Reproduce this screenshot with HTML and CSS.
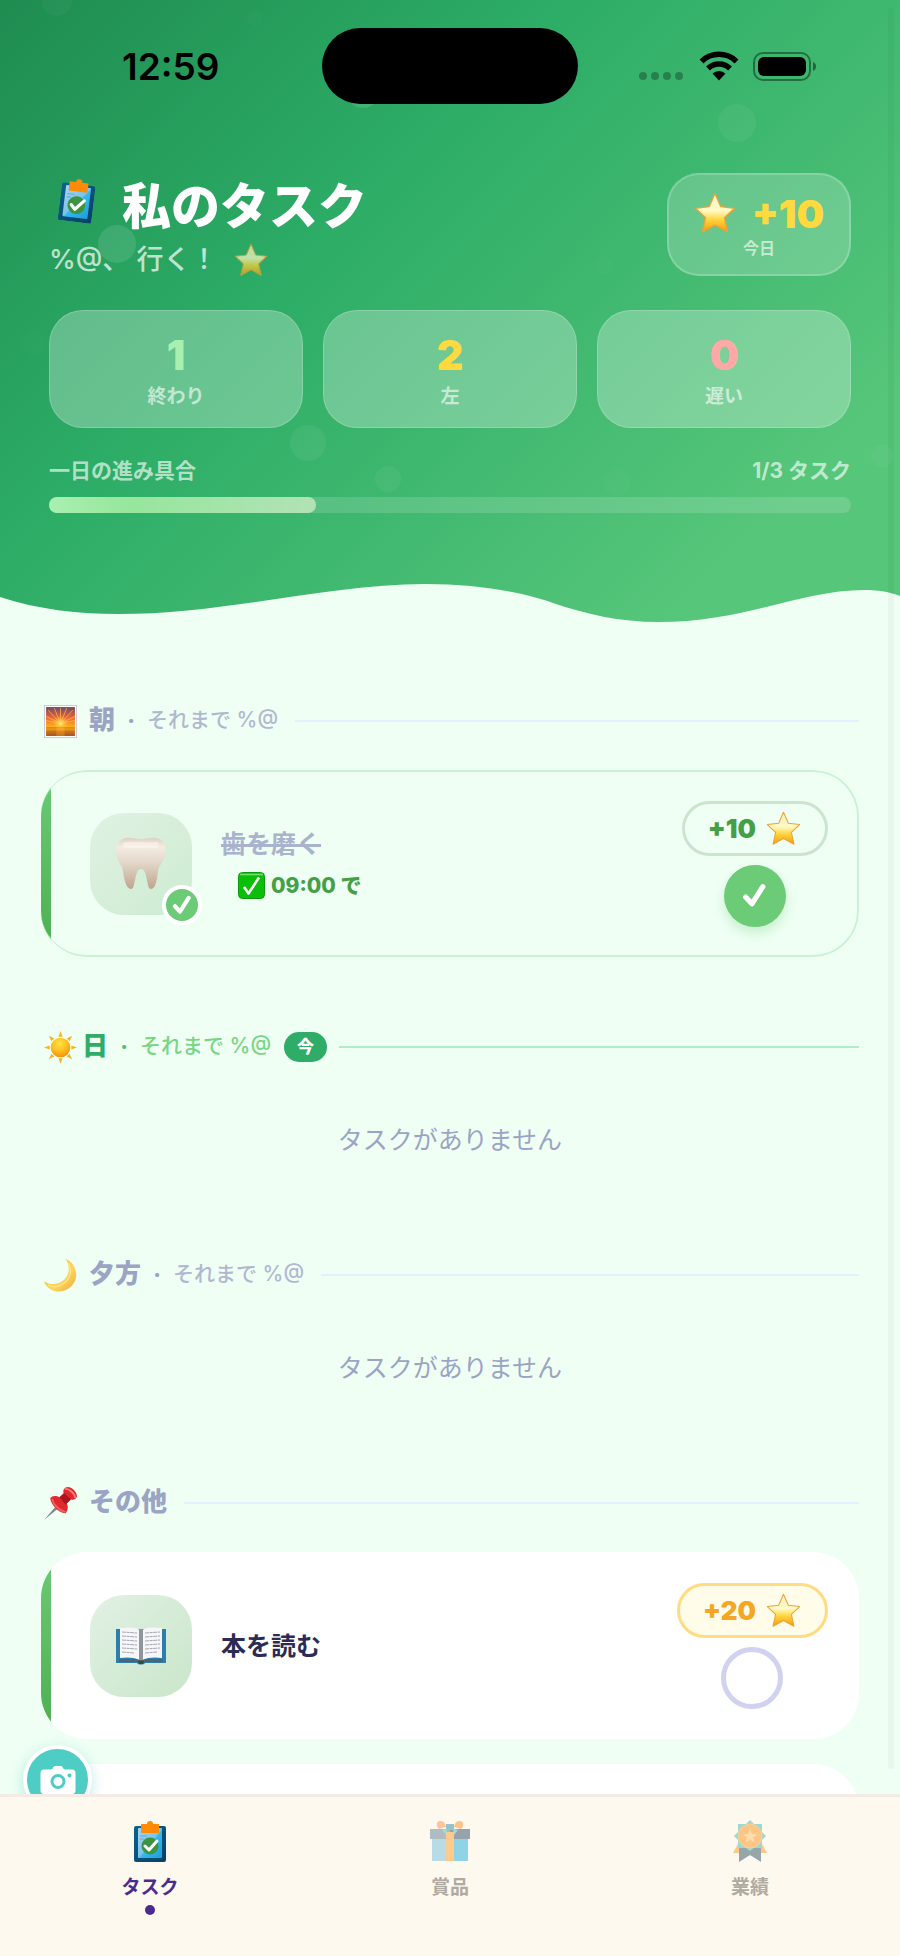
FILE: index.html
```html
<!DOCTYPE html>
<html lang="ja">
<head>
  <meta charset="UTF-8">
  <meta name="viewport" content="width=device-width, initial-scale=1">
  <title>私のタスク</title>
  <link rel="stylesheet" href="styles.css">
</head>
<body>

  <!-- shared icons -->
  <svg class="sprite" aria-hidden="true">
    <defs>
      <linearGradient id="gStar" x1="0" y1="0" x2="0" y2="1">
        <stop offset="0" stop-color="#fff0c8"/><stop offset=".45" stop-color="#fffac4"/>
        <stop offset=".68" stop-color="#ffd53c"/><stop offset="1" stop-color="#f39a12"/>
      </linearGradient>
      <linearGradient id="gPaper" x1="0" y1="0" x2="1" y2="1">
        <stop offset="0" stop-color="#a8d4f0"/><stop offset=".5" stop-color="#7cc3ea"/>
        <stop offset=".55" stop-color="#35b8ee"/><stop offset="1" stop-color="#1a9fdc"/>
      </linearGradient>
      <linearGradient id="gBoard" x1="0" y1="0" x2="1" y2="1">
        <stop offset="0" stop-color="#0b6291"/><stop offset="1" stop-color="#073f66"/>
      </linearGradient>
    </defs>
    <symbol id="star" viewBox="0 0 40 40">
      <path d="M20 1.500 L25.500 14 L38.500 15.500 L29 24.500 L32 38 L20 31.500 L8 38 L11 24.500 L1.500 15.500 L14.500 14 Z" fill="url(#gStar)" stroke="#eda236" stroke-width="1.200" stroke-linejoin="round"/>
    </symbol>
    <symbol id="clipboard" viewBox="0 0 32 42">
      <rect x="0" y="6" width="32" height="36" rx="2" fill="url(#gBoard)"/>
      <rect x="4" y="8" width="24" height="30" rx="1" fill="url(#gPaper)"/>
      <path d="M6 16h7M6 19h4" stroke="#6aa7d2" stroke-width="1"/>
      <path d="M7 4h6a3 3 0 0 1 6 0h6v9h-18z" fill="#ff8a05"/>
      <circle cx="16" cy="26" r="8.500" fill="#3c9440"/>
      <path d="M11 26l4 4 8-9" fill="none" stroke="#fff" stroke-width="3" stroke-linecap="round" stroke-linejoin="round"/>
    </symbol>
    <symbol id="check" viewBox="0 0 24 24">
      <path d="M3.500 13.500l6 6.500L20 3.500" fill="none" stroke="#fff" stroke-width="5" stroke-linecap="round" stroke-linejoin="round"/>
    </symbol>
  </svg>

  <div class="app">
    <div class="scroll">

      <header class="hero">
        <svg class="bubbles" viewBox="0 0 900 624" preserveAspectRatio="none" aria-hidden="true">
          <g fill="#fff">
            <circle cx="57" cy="1" r="15" opacity=".03"/>
            <circle cx="255" cy="18" r="8" opacity=".02"/>
            <circle cx="363" cy="91" r="17" opacity=".12"/>
            <circle cx="117" cy="244" r="19" opacity=".11"/>
            <circle cx="737" cy="123" r="19" opacity=".05"/>
            <circle cx="604" cy="265" r="9" opacity=".02"/>
            <circle cx="33" cy="344" r="12" opacity=".01"/>
            <circle cx="308" cy="443" r="18" opacity=".06"/>
            <circle cx="388" cy="479" r="13" opacity=".05"/>
            <circle cx="617" cy="482" r="14" opacity=".02"/>
            <circle cx="882" cy="456" r="11" opacity=".04"/>
          </g>
        </svg>

        <div class="status-bar">
          <span class="clock">12:59</span>
          <span class="island"></span>
          <span class="status-icons">
            <svg width="46" height="30" viewBox="0 0 46 30" aria-hidden="true">
              <g opacity=".28"><circle cx="4" cy="25" r="4"/><circle cx="16" cy="25" r="4"/><circle cx="28" cy="25" r="4"/><circle cx="40" cy="25" r="4"/></g>
            </svg>
            <svg width="40" height="30" viewBox="0 0 40 30" aria-hidden="true">
              <g fill="none" stroke="#000" stroke-width="5.500">
                <path d="M2.500 10.500a25 25 0 0 1 35 0"/>
                <path d="M9 17.500a16 16 0 0 1 22 0"/>
              </g>
              <path d="M13.500 22.500a9.500 9.500 0 0 1 13 0L20 29.500z"/>
            </svg>
            <svg width="66" height="30" viewBox="0 0 66 30" aria-hidden="true">
              <rect x="1" y="2" width="56" height="27" rx="9" fill="none" stroke="#000" stroke-opacity=".4" stroke-width="2"/>
              <rect x="5" y="6" width="48" height="19" rx="6"/>
              <path d="M60 11c4 1 4 8 0 9z" opacity=".45"/>
            </svg>
          </span>
        </div>

        <div class="title-row">
          <div>
            <h1><svg class="title-icon" aria-hidden="true"><use href="#clipboard"/></svg>私のタスク</h1>
            <p class="subtitle">%@、 行く！<svg aria-hidden="true"><use href="#star"/></svg></p>
          </div>
          <div class="today">
            <div class="today-value"><svg aria-hidden="true"><use href="#star"/></svg>+10</div>
            <div class="today-label">今日</div>
          </div>
        </div>

        <div class="stats">
          <div class="stat done"><b>1</b><span>終わり</span></div>
          <div class="stat left"><b>2</b><span>左</span></div>
          <div class="stat late"><b>0</b><span>遅い</span></div>
        </div>

        <div class="progress-text"><span>一日の進み具合</span><span>1/3 タスク</span></div>
        <div class="progress" role="progressbar" aria-valuenow="1" aria-valuemin="0" aria-valuemax="3" aria-label="一日の進み具合">
          <div class="progress-fill" style="width: 33.3%"></div>
        </div>

        <svg class="wave" viewBox="0 0 900 48" preserveAspectRatio="none" aria-hidden="true">
          <path d="M0 21C40 34 80 38 118 38C225 38 330 8 425 8C480 8 525 17 553 27C585 38 620 46 658 46C745 46 800 14 865 14C878 14 890 16 900 20V48H0Z" fill="#effff4"/>
        </svg>
      </header>

      <main class="content">
        <section class="period">
          <div class="period-head">
            <svg class="emoji" viewBox="0 0 32 32" aria-hidden="true">
              <defs>
                <linearGradient id="gSky" x1="0" y1="0" x2="0" y2="1">
                  <stop offset="0" stop-color="#6c4a6c"/><stop offset=".35" stop-color="#e8623c"/>
                  <stop offset=".6" stop-color="#ff9a1e"/><stop offset=".68" stop-color="#ffb21c"/>
                  <stop offset="1" stop-color="#a14a22"/>
                </linearGradient>
                <radialGradient id="gGlow"><stop offset="0" stop-color="#fff27a"/><stop offset="1" stop-color="#ffb020" stop-opacity="0"/></radialGradient>
              </defs>
              <rect x=".5" y=".5" width="31" height="31" fill="#fff" stroke="#cfc9d4"/>
              <rect x="2" y="2" width="28" height="28" fill="url(#gSky)"/>
              <g stroke="#ffc34a" stroke-width=".8" opacity=".8">
                <path d="M16 18L16 3M16 18L10 3M16 18L22 3M16 18L4 5M16 18L28 5M16 18L2 11M16 18L30 11M16 18L2 15M16 18L30 15"/>
              </g>
              <circle cx="16" cy="18" r="8" fill="url(#gGlow)"/>
              <path d="M2 22h28M2 26h28" stroke="#c85f1c" stroke-width="1" opacity=".6"/>
              <path d="M12 20h8v10h-8z" fill="#ffb02a" opacity=".35"/>
            </svg>
            <h2>朝</h2><span class="dot">·</span><span class="until">それまで %@</span>
            <span class="line"></span>
          </div>
          <article class="task completed">
            <div class="tile">
              <svg width="50" height="54" viewBox="0 0 50 54" aria-hidden="true">
                <defs><linearGradient id="gTooth" x1="0" y1="0" x2="0" y2="1">
                  <stop offset="0" stop-color="#ddd0c2"/><stop offset=".18" stop-color="#f4ece2"/>
                  <stop offset=".5" stop-color="#e2d6c8"/><stop offset="1" stop-color="#bfa48e"/>
                </linearGradient></defs>
                <path d="M10 1C16 0 20 2 25 2S34 0 40 1C49 2 51 12 49 19C47 26 43 28 42 34C41 42 40 52 35 52C30 52 32 32 25 32C18 32 20 52 15 52C10 52 8 42 7 34C6 28 2 26 1 19C-1 12 1 2 10 1Z" fill="url(#gTooth)"/>
                <path d="M10 8C20 7 30 9 40 8" stroke="#fbf6ef" stroke-width="6" stroke-linecap="round" fill="none" opacity=".6"/>
              </svg>
              <span class="tile-badge"><svg aria-hidden="true"><use href="#check"/></svg></span>
            </div>
            <div class="task-body">
              <h3>歯を磨く</h3>
              <p class="task-time">
                <svg width="27" height="27" viewBox="0 0 27 27" aria-hidden="true">
                  <rect x=".5" y=".5" width="26" height="26" rx="4" fill="#0bbf08" stroke="#0a9c0c"/>
                  <path d="M2 2.500h23" stroke="#6fe46a" stroke-width="1.500"/>
                  <path d="M6 15l4.500 6.500L21 5.500" fill="none" stroke="#fff" stroke-width="2.600" stroke-linejoin="round"/>
                </svg>
                09:00 で
              </p>
            </div>
            <div class="task-side">
              <span class="points">+10<svg aria-hidden="true"><use href="#star"/></svg></span>
              <label class="tick"><input type="checkbox" checked aria-label="歯を磨く"><svg aria-hidden="true"><use href="#check"/></svg></label>
            </div>
          </article>
        </section>

        <section class="period current">
          <div class="period-head">
            <svg class="emoji" viewBox="0 0 32 32" aria-hidden="true">
              <defs><radialGradient id="gSun" cx=".45" cy=".3" r=".75"><stop offset="0" stop-color="#ffe14a"/><stop offset=".5" stop-color="#ffc01e"/><stop offset="1" stop-color="#f2890c"/></radialGradient></defs>
              <g fill="#f5b429">
                <path d="M16 0l2 5.500h-4zM16 32l2-5.500h-4zM0 16l5.500-2v4zM32 16l-5.500-2v4z"/>
                <path d="M4.700 4.700l5.300 2.500-2.800 2.800zM27.300 4.700l-5.300 2.500 2.800 2.800zM4.700 27.300l5.300-2.500-2.800-2.800zM27.300 27.300l-5.300-2.500 2.800-2.800z"/>
              </g>
              <circle cx="16" cy="16" r="9.500" fill="url(#gSun)"/>
            </svg>
            <h2>日</h2><span class="dot">·</span><span class="until">それまで %@</span>
            <span class="now">今</span>
            <span class="line"></span>
          </div>
          <p class="empty">タスクがありません</p>
        </section>

        <section class="period">
          <div class="period-head">
            <svg class="emoji" viewBox="0 0 32 32" aria-hidden="true">
              <defs><linearGradient id="gMoon" x1="0" y1="0" x2="1" y2="1"><stop offset="0" stop-color="#f1b62c"/><stop offset=".6" stop-color="#fbd65c"/><stop offset="1" stop-color="#eda93a"/></linearGradient></defs>
              <path d="M21 0C31 4 35 17 27 26C19 35 4 33 0 21.500C7 26 16 25 21 18.500C25 13 25 6 21 0Z" fill="url(#gMoon)"/>
              <path d="M24 4c3 8 1 15-4 19s-11 5-16 2" fill="none" stroke="#ffe890" stroke-width="1.500" opacity=".8"/>
            </svg>
            <h2>夕方</h2><span class="dot">·</span><span class="until">それまで %@</span>
            <span class="line"></span>
          </div>
          <p class="empty">タスクがありません</p>
        </section>

        <section class="period">
          <div class="period-head">
            <svg class="emoji" viewBox="0 0 32 32" aria-hidden="true">
              <path d="M0 32L13 17l2.500 2.500z" fill="#7c8a90"/>
              <path d="M6 11c2-3 6-3 9-1l4-4c-1-3 1-6 4-6 4 0 9 5 9 9-1 3-3 4-6 3l-4 4c2 3 1 7-1 9.500C15 26 7 18 6 11z" fill="#de2a2e"/>
              <path d="M15 10l5-4 6 6-5 5z" fill="#a91520"/>
              <path d="M21 2c2-1 9 4 9 8" fill="none" stroke="#ff7a78" stroke-width="1.800" stroke-linecap="round"/>
              <path d="M8 12c1 5 6 10 12 12" fill="none" stroke="#f4605f" stroke-width="1.800" stroke-linecap="round"/>
            </svg>
            <h2>その他</h2>
            <span class="line"></span>
          </div>
          <article class="task">
            <div class="tile">
              <svg width="50" height="38" viewBox="0 0 50 38" aria-hidden="true">
                <path d="M0 2h50v34H29c-1 2-7 2-8 0H0z" fill="#2b7fae"/>
                <path d="M3 32h44v3H3z" fill="#56626a"/>
                <path d="M4 1c8-1 16-1 20 2v30c-6-3-14-3-20-2z" fill="#f6f6f8"/>
                <path d="M46 1C38 0 30 0 26 3v30c6-3 14-3 20-2z" fill="#f6f6f8"/>
                <path d="M23 2h4v31h-4z" fill="#8f959b"/>
                <path d="M22 34h6l-1 3h-4z" fill="#2f5130"/>
                <g stroke="#a6a8b2" stroke-width="1" stroke-dasharray="4 .6 3 .6">
                  <path d="M6 5l15 1M6 9l15 1M6 13l15 1M6 17l15 1M6 21l15 1M6 25l12 1M29 6l15-1M29 10l15-1M29 14l15-1M29 18l15-1M29 22l15-1M29 26l12-1"/>
                </g>
              </svg>
            </div>
            <div class="task-body"><h3>本を読む</h3></div>
            <div class="task-side">
              <span class="points">+20<svg aria-hidden="true"><use href="#star"/></svg></span>
              <label class="tick"><input type="checkbox" aria-label="本を読む"><svg aria-hidden="true"><use href="#check"/></svg></label>
            </div>
          </article>
          <article class="task"></article>
        </section>
      </main>

      <div class="scrollbar"></div>
      <button class="fab" type="button" aria-label="カメラ">
        <svg width="36" height="28" viewBox="0 0 36 28" aria-hidden="true">
          <path d="M4 3.500h7c2 0 2-3.500 4.500-3.500h5c2.500 0 2.500 3.500 4.500 3.500h7a3.500 3.500 0 0 1 3.500 3.500v17.500a3.500 3.500 0 0 1-3.500 3.500H4A3.500 3.500 0 0 1 .5 24.500V7A3.500 3.500 0 0 1 4 3.500z" fill="#fff"/>
          <circle cx="18" cy="15.500" r="6" fill="none" stroke="#4ecdc4" stroke-width="3"/>
          <circle cx="29.500" cy="9.500" r="2" fill="#4ecdc4"/>
        </svg>
      </button>
    </div>

    <nav class="tabs">
      <a class="tab active" href="#tasks">
        <svg width="32" height="42" aria-hidden="true"><use href="#clipboard"/></svg>
        <span>タスク</span>
      </a>
      <a class="tab" href="#rewards">
        <svg width="40" height="42" viewBox="0 0 40 42" aria-hidden="true">
          <path d="M2 16h36v25H2z" fill="#25aee0"/>
          <path d="M2 16h18v25H2z" fill="#76bfdd"/>
          <path d="M0 9h40v10H0z" fill="#33506a"/>
          <path d="M0 9h20v10H0z" fill="#62829a"/>
          <path d="M16 12h8v29h-8z" fill="#ff9f2c"/>
          <path d="M16 4h8v6h-8z" fill="#2f8fa8"/>
          <path d="M16 7L9 9C6 7 6 1 10 1c4 0 5 2 6 6z" fill="#ff8f4a"/>
          <path d="M24 7l7 2c3-2 3-8-1-8-4 0-5 2-6 6z" fill="#ff8c2a"/>
          <path d="M17 9l-5 1 4 5zM23 9l5 1-4 5z" fill="#3fc2c9"/>
        </svg>
        <span>賞品</span>
      </a>
      <a class="tab" href="#achievements">
        <svg width="34" height="42" viewBox="0 0 34 42" aria-hidden="true">
          <path d="M0 33l5-9 5 9zM34 33l-5-9-5 9z" fill="#ff9a22"/>
          <path d="M6 24h22v18l-11-7-11 7z" fill="#31556b"/>
          <path d="M17 0l4 4h8v8l4 4-4 4v8h-8l-4 3-4-3H5v-8l-4-4 4-4V4h8z" fill="#3fb8bd"/>
          <circle cx="17" cy="16" r="12" fill="#ff9420"/>
          <circle cx="17" cy="16" r="12" fill="none" stroke="#eeb13c"/>
          <path d="M17 9l2 5 5 .5-4 3 1.500 5-4.500-3-4.500 3 1.500-5-4-3 5-.5z" fill="#ffc46a"/>
        </svg>
        <span>業績</span>
      </a>
    </nav>
  </div>

</body>
</html>
```
FILE: styles.css
```css
* {
  box-sizing: border-box;
}

body {
  margin: 0;
  font-family: Inter, 'Noto Sans CJK JP', sans-serif;
  background: #effff4;
  color: #2d2b55;
}

h1, h2, h3, p {
  margin: 0;
}

svg {
  display: block;
  flex: none;
}

.sprite {
  position: absolute;
  width: 0;
  height: 0;
}

.app {
  display: flex;
  flex-direction: column;
  height: 100vh;
}

.scroll {
  position: relative;
  flex: 1;
  min-height: 0;
  overflow: hidden;
}

/* header */
.hero {
  position: relative;
  padding: 28px 49px 0;
  background: linear-gradient(135deg, #1f8c50 0%, #2cac66 36%, #56c67a 85%);
  color: #fff;
}

.hero > * {
  position: relative;
}

.hero .bubbles {
  position: absolute;
  top: 0;
  left: 0;
  width: 100%;
  height: 100%;
}

.status-bar {
  display: grid;
  grid-template-columns: 1fr 256px 1fr;
  align-items: center;
  height: 76px;
  color: #000;
}

.clock {
  padding-left: 73px;
  font-size: 37px;
  font-weight: 600;
}

.island {
  height: 76px;
  border-radius: 38px;
  background: #000;
}

.status-icons {
  display: flex;
  justify-content: flex-end;
  gap: 14px;
  padding-right: 32px;
}

.title-row {
  display: flex;
  justify-content: space-between;
  align-items: flex-start;
  margin-top: 69px;
}

h1 {
  display: flex;
  align-items: center;
  gap: 28px;
  padding-left: 11px;
  font-size: 49px;
  font-weight: 900;
  line-height: 68px;
}

.title-icon {
  width: 34px;
  height: 44px;
  margin-bottom: 14px;
  transform: rotate(7deg);
}

.subtitle {
  display: flex;
  align-items: center;
  gap: 16px;
  font-size: 27px;
  font-weight: 500;
  line-height: 38px;
  opacity: .7;
}

.subtitle svg {
  width: 34px;
  height: 34px;
}

.today {
  width: 184px;
  height: 103px;
  padding-top: 17px;
  border: 2px solid rgba(255, 255, 255, .2);
  border-radius: 32px;
  background: rgba(255, 255, 255, .2);
  text-align: center;
}

.today-value {
  display: flex;
  justify-content: center;
  align-items: center;
  gap: 16px;
  height: 42px;
  color: #ffd93d;
  font-size: 39px;
  font-weight: 900;
}

.today-value svg {
  width: 42px;
  height: 42px;
}

.today-label {
  font-size: 16px;
  font-weight: 700;
  line-height: 28px;
  opacity: .6;
}

.stats {
  display: grid;
  grid-template-columns: repeat(3, 1fr);
  gap: 20px;
  margin-top: 31px;
}

.stat {
  display: flex;
  flex-direction: column;
  align-items: center;
  height: 118px;
  padding-top: 22px;
  border: 1px solid rgba(255, 255, 255, .2);
  border-radius: 34px;
  background: rgba(255, 255, 255, .28);
}

.stat b {
  font-size: 41px;
  font-weight: 900;
  line-height: 44px;
}

.stat span {
  font-size: 19px;
  font-weight: 700;
  line-height: 40px;
  opacity: .6;
}

.done b { color: #a8f0b0; }
.left b { color: #ffd93d; }
.late b { color: #ffa8a8; }

.progress-text {
  display: flex;
  justify-content: space-between;
  margin-top: 27px;
  color: rgba(255, 255, 255, .65);
  font-size: 21px;
  font-weight: 700;
  line-height: 32px;
}

.progress {
  height: 16px;
  margin-top: 10px;
  border-radius: 8px;
  background: rgba(255, 255, 255, .15);
}

.progress-fill {
  height: 100%;
  border-radius: 8px;
  background: linear-gradient(90deg, #a8f0b0, #96e69c 30%, #b2e2b6);
}

.wave {
  width: calc(100% + 98px);
  height: 48px;
  margin: 63px -49px 0;
}

/* task periods */
.content {
  padding: 80px 41px 0;
}

.period {
  margin-bottom: 73px;
}

.period-head {
  display: flex;
  align-items: center;
  height: 34px;
  margin-bottom: 32px;
  color: #9ba4c4;
}

.emoji {
  width: 33px;
  height: 33px;
  margin: 0 12px 0 3px;
}

.current .emoji {
  margin-right: 5px;
}

.period-head h2, .until {
  line-height: 30px;
  padding-bottom: 2px;
}

.period-head h2 {
  font-size: 26px;
  font-weight: 900;
}

.dot {
  width: 32px;
  text-align: center;
  font-size: 22px;
  font-weight: 800;
}

.until {
  color: #b0b8d0;
  font-size: 21px;
  font-weight: 500;
}

.line {
  flex: 1;
  height: 2px;
  margin-left: 17px;
  background: #e4f1fc;
}

.current h2 {
  color: #2eac68;
}

.current .dot {
  color: #4fbf78;
}

.current .until {
  color: #78d586;
}

.current .line {
  margin-left: 12px;
  background: #b2ecc9;
}

.now {
  width: 43px;
  margin-left: 13px;
  border-radius: 15px;
  background: #2eac68;
  color: #fff;
  font-size: 17px;
  font-weight: 900;
  line-height: 30px;
  text-align: center;
}

.empty {
  padding: 27px 0;
  color: #9ba4c4;
  font-size: 25px;
  line-height: 35px;
  text-align: center;
}

.task {
  position: relative;
  display: flex;
  align-items: center;
  height: 187px;
  padding: 0 31px 0 49px;
  margin-bottom: 25px;
  border-radius: 46px;
  background: #fff;
  overflow: hidden;
}

/* coloured strip along the left edge, cut by the card's corners */
.task::before {
  content: '';
  position: absolute;
  top: 0;
  bottom: 0;
  left: 0;
  width: 10px;
  background: linear-gradient(#6bcb77, #4caf50);
}

.task.completed {
  background: none;
}

.task.completed::after {
  content: '';
  position: absolute;
  inset: 0;
  border: 2px solid #cbf1d5;
  border-left: 0;
  border-radius: 46px;
  pointer-events: none;
}

.tile {
  position: relative;
  display: grid;
  place-items: center;
  width: 102px;
  height: 102px;
  border-radius: 34px;
  background: linear-gradient(135deg, #e2f1e4, #c8e6c9);
}

.completed .tile {
  background: linear-gradient(135deg, #e0f2e3, #cdebd0);
}

.tile-badge {
  position: absolute;
  right: -10px;
  bottom: -10px;
  display: grid;
  place-items: center;
  width: 40px;
  height: 40px;
  border: 4px solid #fff;
  border-radius: 50%;
  background: #6bcb77;
}

.tile-badge svg {
  width: 20px;
  height: 20px;
}

.task-body {
  flex: 1;
  padding-left: 29px;
}

.task h3 {
  font-size: 25px;
  font-weight: 700;
  line-height: 36px;
}

.completed h3 {
  color: #a9b3cd;
  text-decoration: line-through 3px;
}

.task-time {
  display: flex;
  align-items: center;
  gap: 6px;
  margin-top: 8px;
  padding-left: 17px;
  color: #43a047;
  font-size: 21px;
  font-weight: 800;
  line-height: 32px;
}

.task-side {
  display: flex;
  flex-direction: column;
  align-items: center;
  gap: 9px;
}

.points {
  display: flex;
  align-items: center;
  gap: 10px;
  height: 55px;
  padding: 0 24px 0 23px;
  border: 3px solid #ffdc82;
  border-radius: 28px;
  background: #fffde9;
  color: #f5a623;
  font-size: 26px;
  font-weight: 900;
}

.points svg {
  width: 35px;
  height: 35px;
}

.completed .points {
  border-color: #cbe4ce;
  background: none;
  color: #43a047;
}

.tick {
  display: grid;
  place-items: center;
}

.tick > * {
  grid-area: 1 / 1;
}

.tick input {
  appearance: none;
  width: 62px;
  height: 62px;
  margin: 0;
  border: 5px solid #d0d2f0;
  border-radius: 50%;
}

.tick input:checked {
  border: 0;
  background: #6bcb77;
  box-shadow: 0 6px 12px rgba(107, 203, 119, .3);
}

.tick svg {
  display: none;
  position: relative;
  width: 25px;
  height: 25px;
}

.tick input:checked + svg {
  display: block;
}

.scrollbar {
  position: absolute;
  top: 8px;
  right: 6px;
  bottom: 25px;
  width: 6px;
  border-radius: 3px;
  background: rgba(0, 0, 0, .03);
}

.fab {
  position: absolute;
  left: 23px;
  bottom: -20px;
  display: grid;
  place-items: center;
  width: 69px;
  height: 69px;
  padding: 0;
  border: 4px solid #fff;
  border-radius: 50%;
  background: #4ecdc4;
  box-shadow: 0 4px 14px rgba(78, 205, 196, .4);
}

/* bottom tabs */
.tabs {
  display: grid;
  grid-template-columns: repeat(3, 1fr);
  height: 162px;
  border-top: 3px solid #f5ebe6;
  background: #fef9ee;
}

.tab {
  display: flex;
  flex-direction: column;
  align-items: center;
  padding-top: 23px;
  color: #8f8a82;
  font-size: 19px;
  font-weight: 700;
  line-height: 30px;
  text-decoration: none;
}

.tab span {
  margin-top: 11px;
  opacity: .7;
}

.tab:not(.active) svg {
  opacity: .5;
}

.tab.active {
  color: #4a2c91;
}

.tab.active span {
  opacity: 1;
}

.tab.active::after {
  content: '';
  width: 10px;
  height: 10px;
  margin-top: 2px;
  border-radius: 50%;
  background: #4a2c91;
}
```
